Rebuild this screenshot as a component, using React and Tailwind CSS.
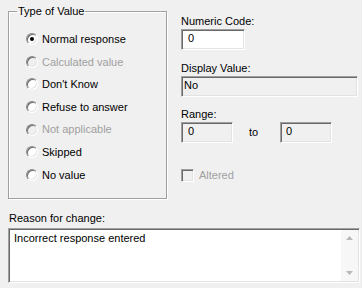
import React from 'react';

const options = [
  { label: 'Normal response', checked: true },
  { label: 'Calculated value', disabled: true },
  { label: "Don't Know" },
  { label: 'Refuse to answer' },
  { label: 'Not applicable', disabled: true },
  { label: 'Skipped' },
  { label: 'No value' },
];

// classic sunken 3D edge
const sunken =
  'border border-t-[#a0a0a0] border-l-[#a0a0a0] border-b-white border-r-white shadow-[inset_1px_1px_0_#696969,inset_-1px_-1px_0_#e3e3e3]';

const Radio = ({ checked, disabled }) => (
  <span
    className={`relative flex items-center justify-center w-[12px] h-[12px] rounded-full border border-t-[#8a8a8a] border-l-[#8a8a8a] border-b-white border-r-white shadow-[inset_1px_1px_0_#6d6d6d,inset_-1px_-1px_0_#e3e3e3] ${
      disabled ? 'bg-[#f0f0f0]' : 'bg-white'
    }`}
  >
    {checked && <span className="w-[4px] h-[4px] rounded-full bg-black" />}
  </span>
);

const Field = ({ value, className }) => (
  <div className={`${sunken} h-[21px] leading-[17px] ${className}`}>{value}</div>
);

const App = () => {
  return (
    <div
      className="w-[362px] h-[288px] bg-[#f0f0f0] text-[11px] text-black flex flex-col"
      style={{ fontFamily: '"Liberation Sans", Arial, sans-serif' }}
    >
      <div className="flex items-start pl-[8px]">
        <fieldset className="mt-[5px] w-[159px] h-[194px] border border-[#a0a0a0] shadow-[inset_1px_1px_0_#fff,1px_1px_0_#fff] px-0 pt-[11px]">
          <legend className="ml-[8px] px-[1px] leading-[12px]">Type of Value</legend>
          <div className="flex flex-col pl-[17px]">
            {options.map((o) => (
              <div key={o.label} className="flex items-center h-[22.6px]">
                <Radio checked={o.checked} disabled={o.disabled} />
                <span className={`ml-[4px] ${o.disabled ? 'text-[#a0a0a0]' : ''}`}>{o.label}</span>
              </div>
            ))}
          </div>
        </fieldset>

        <div className="ml-[14px] pt-[15px] flex flex-col">
          <div className="leading-[13px]">Numeric Code:</div>
          <Field value="0" className="mt-[1px] w-[64px] bg-white pl-[6px]" />

          <div className="mt-[12px] leading-[13px]">Display Value:</div>
          <Field value="No" className="mt-[1px] w-[177px] bg-[#f0f0f0] pl-[2px]" />

          <div className="mt-[11px] leading-[13px]">Range:</div>
          <div className="mt-[1px] flex items-center">
            <Field value="0" className="w-[52px] bg-[#f0f0f0] pl-[6px]" />
            <span className="ml-[16px] w-[31px]">to</span>
            <Field value="0" className="w-[52px] bg-[#f0f0f0] pl-[5px]" />
          </div>

          <div className="mt-[24px] flex items-center">
            <span className={`${sunken} w-[13px] h-[13px] bg-[#f0f0f0]`} />
            <span className="ml-[5px] text-[#a0a0a0]">Altered</span>
          </div>
        </div>
      </div>

      <div className="mt-[13px] pl-[9px] leading-[13px]">Reason for change:</div>
      <div className={`${sunken} mt-[3px] ml-[8px] w-[352px] h-[55px] bg-white flex`}>
        <div className="flex-1 pl-[5px] pt-[2px] leading-[14px]">Incorrect response entered</div>
        <div className="w-[17px] my-[1px] mr-[1px] bg-[#f7f7f7] flex flex-col items-center justify-between py-[6px]">
          <svg width="7" height="4" viewBox="0 0 7 4">
            <path d="M0 4 L3.5 0 L7 4 Z" fill="#b8b8b8" />
          </svg>
          <svg width="7" height="4" viewBox="0 0 7 4">
            <path d="M0 0 L3.5 4 L7 0 Z" fill="#b8b8b8" />
          </svg>
        </div>
      </div>
    </div>
  );
};

export default App;
